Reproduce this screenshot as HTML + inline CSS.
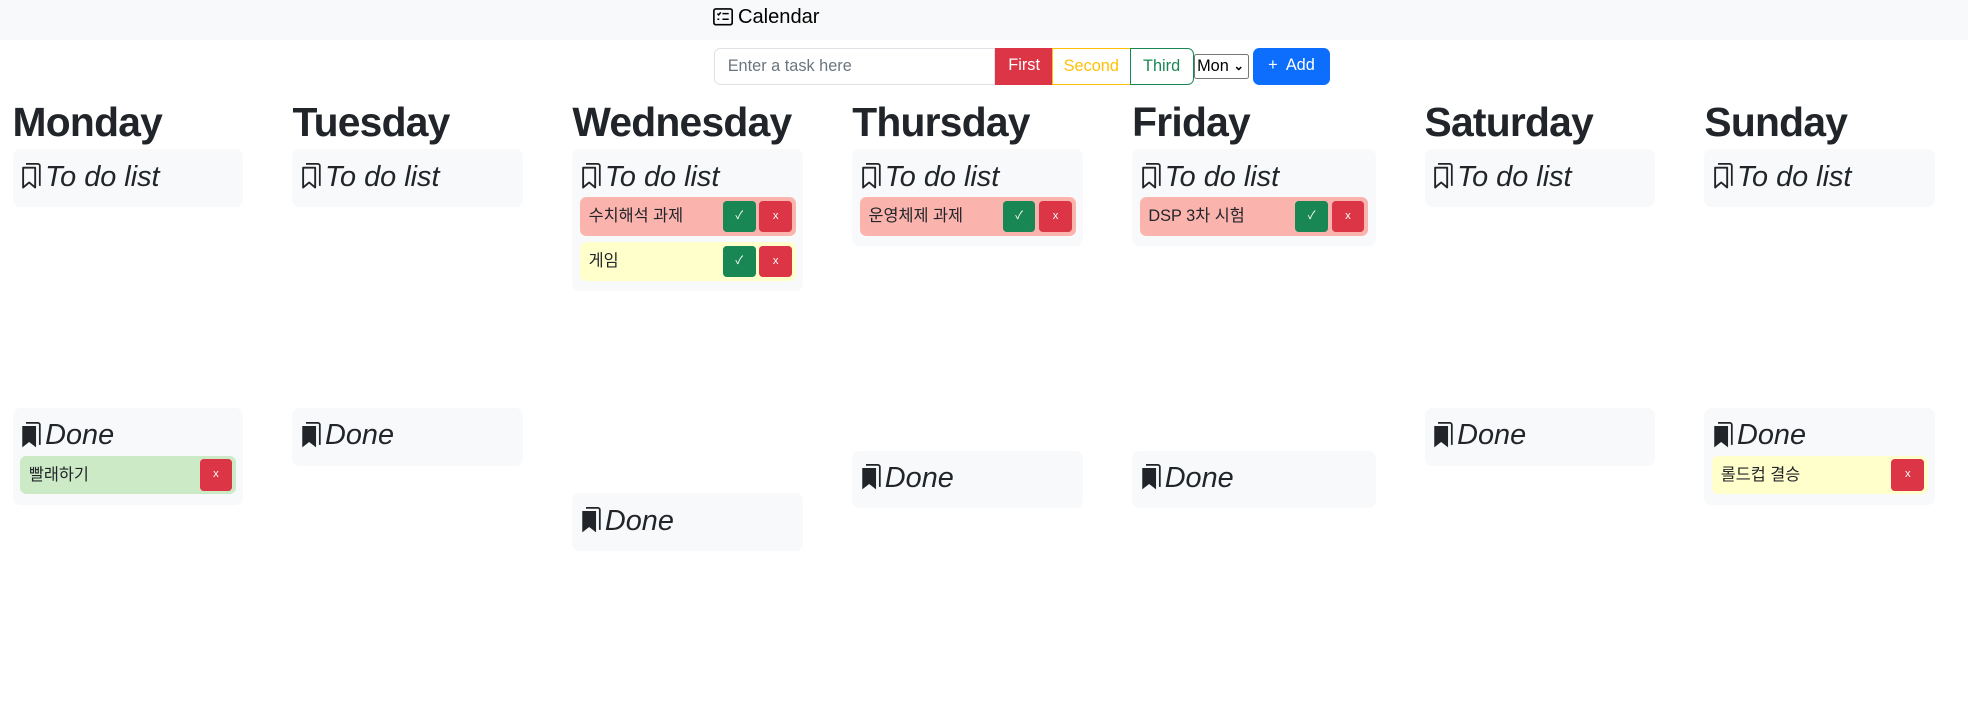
<!DOCTYPE html>
<html><head><meta charset="utf-8">
<style>
html,body{margin:0;padding:0;background:#fff;}
body{zoom:1.2551;width:1568px;height:573px;position:relative;overflow:hidden;font-family:"Liberation Sans","Noto Sans CJK KR",sans-serif;color:#212529;}
.nav{position:absolute;left:0;top:0;width:1568px;height:32px;background:#f8f9fa;}
.brand{position:absolute;left:568px;top:4px;font-size:16px;line-height:20px;color:#000;}
.brand svg{vertical-align:-2px;margin-right:4px}
.inp{position:absolute;left:569px;top:38px;width:224px;height:30px;box-sizing:border-box;border:1px solid #dee2e6;border-radius:5px 0 0 5px;font-size:13px;color:#6c757d;padding:7px 10px;line-height:15px;}
.b{position:absolute;top:38px;height:30px;box-sizing:border-box;font-size:13px;line-height:28px;text-align:center;}
.sel{position:absolute;left:951px;top:43px;width:44px;height:20px;box-sizing:border-box;border:1px solid #767676;border-radius:2px;font-size:13px;line-height:18px;padding-left:2px;color:#000;}
h1{position:absolute;margin:0;font-size:32.5px;font-weight:bold;top:79px;white-space:nowrap;letter-spacing:-0.6px;}
.card{position:absolute;width:184px;background:#f8f9fa;border-radius:6px;box-sizing:border-box;padding:6px 6px 8px;}
.title{height:32px;font-style:italic;font-size:23px;line-height:32px;padding-left:1px;white-space:nowrap;}
.title svg{vertical-align:-3px;margin-right:2px}
.item{height:31px;border-radius:5px;margin-bottom:5px;position:relative;font-size:13px;line-height:31px;padding-left:7px;}
.item:last-child{margin-bottom:0}
.red{background:#fbb3ae}.yel{background:#ffffcc}.grn{background:#cdeac7}
.ok,.x{position:absolute;top:3px;width:26px;height:25px;border-radius:3px;color:#fff;font-size:9px;line-height:25px;text-align:center;}
.ok{background:#198754;right:32px}.x{background:#dc3545;right:3px}
</style></head><body>
<div class="nav"><div class="brand"><svg width="16" height="14" viewBox="0 0 16 14"><rect x="0.7" y="0.7" width="14.6" height="12.6" rx="1.5" fill="none" stroke="#000" stroke-width="1.3"/><path d="M3.5 4.5l1 1 1.7-2M3.5 9h1.5M7.5 4.5h5M7.5 9h5" stroke="#000" stroke-width="1.2" fill="none"/></svg>Calendar</div></div>
<div class="inp">Enter a task here</div>
<div class="b" style="left:793px;width:46px;background:#dc3545;color:#fff;">First</div>
<div class="b" style="left:838px;width:63px;border:1px solid #ffc107;color:#ffc107;">Second</div>
<div class="b" style="left:900px;width:51px;border:1px solid #198754;color:#198754;border-radius:0 5px 5px 0;">Third</div>
<div class="sel">Mon<span style="position:absolute;right:3px;top:0;font-size:10px;font-weight:bold">&#8964;</span></div>
<div class="b" style="left:998px;width:62px;background:#0d6efd;color:#fff;border-radius:5px;">+&nbsp; Add</div>

<svg width="0" height="0" style="position:absolute"><defs>
<symbol id="bo" viewBox="0 0 17 22"><path d="M4 1.5h9.5a1.5 1.5 0 0 1 1.5 1.5v16" fill="none" stroke="#212529" stroke-width="1.4"/><path d="M1.7 4.5h9.6v15.8l-4.8-4-4.8 4z" fill="none" stroke="#212529" stroke-width="1.5" stroke-linejoin="round"/></symbol>
<symbol id="bf" viewBox="0 0 17 22"><path d="M4 1.5h9.5a1.5 1.5 0 0 1 1.5 1.5v16" fill="none" stroke="#212529" stroke-width="1.4"/><path d="M1 4h11v17l-5.5-4.3L1 21z" fill="#212529"/></symbol>
</defs></svg>

<h1 style="left:10px">Monday</h1>
<div class="card" style="left:10px;top:119px"><div class="title"><svg width="17" height="22"><use href="#bo"/></svg>To do list</div></div>
<div class="card" style="left:10px;top:325px"><div class="title"><svg width="17" height="22"><use href="#bf"/></svg>Done</div>
<div class="item grn">빨래하기<span class="x">x</span></div></div>

<h1 style="left:233px">Tuesday</h1>
<div class="card" style="left:233px;top:119px"><div class="title"><svg width="17" height="22"><use href="#bo"/></svg>To do list</div></div>
<div class="card" style="left:233px;top:325px"><div class="title"><svg width="17" height="22"><use href="#bf"/></svg>Done</div></div>

<h1 style="left:456px">Wednesday</h1>
<div class="card" style="left:456px;top:119px"><div class="title"><svg width="17" height="22"><use href="#bo"/></svg>To do list</div>
<div class="item red">수치해석 과제<span class="ok">✓</span><span class="x">x</span></div>
<div class="item yel">게임<span class="ok">✓</span><span class="x">x</span></div></div>
<div class="card" style="left:456px;top:393px"><div class="title"><svg width="17" height="22"><use href="#bf"/></svg>Done</div></div>

<h1 style="left:679px">Thursday</h1>
<div class="card" style="left:679px;top:119px"><div class="title"><svg width="17" height="22"><use href="#bo"/></svg>To do list</div>
<div class="item red">운영체제 과제<span class="ok">✓</span><span class="x">x</span></div></div>
<div class="card" style="left:679px;top:359px"><div class="title"><svg width="17" height="22"><use href="#bf"/></svg>Done</div></div>

<h1 style="left:902px">Friday</h1>
<div class="card" style="left:902px;top:119px;width:194px"><div class="title"><svg width="17" height="22"><use href="#bo"/></svg>To do list</div>
<div class="item red">DSP 3차 시험<span class="ok">✓</span><span class="x">x</span></div></div>
<div class="card" style="left:902px;top:359px;width:194px"><div class="title"><svg width="17" height="22"><use href="#bf"/></svg>Done</div></div>

<h1 style="left:1135px">Saturday</h1>
<div class="card" style="left:1135px;top:119px"><div class="title"><svg width="17" height="22"><use href="#bo"/></svg>To do list</div></div>
<div class="card" style="left:1135px;top:325px"><div class="title"><svg width="17" height="22"><use href="#bf"/></svg>Done</div></div>

<h1 style="left:1358px">Sunday</h1>
<div class="card" style="left:1358px;top:119px"><div class="title"><svg width="17" height="22"><use href="#bo"/></svg>To do list</div></div>
<div class="card" style="left:1358px;top:325px"><div class="title"><svg width="17" height="22"><use href="#bf"/></svg>Done</div>
<div class="item yel">롤드컵 결승<span class="x">x</span></div></div>
</body></html>
